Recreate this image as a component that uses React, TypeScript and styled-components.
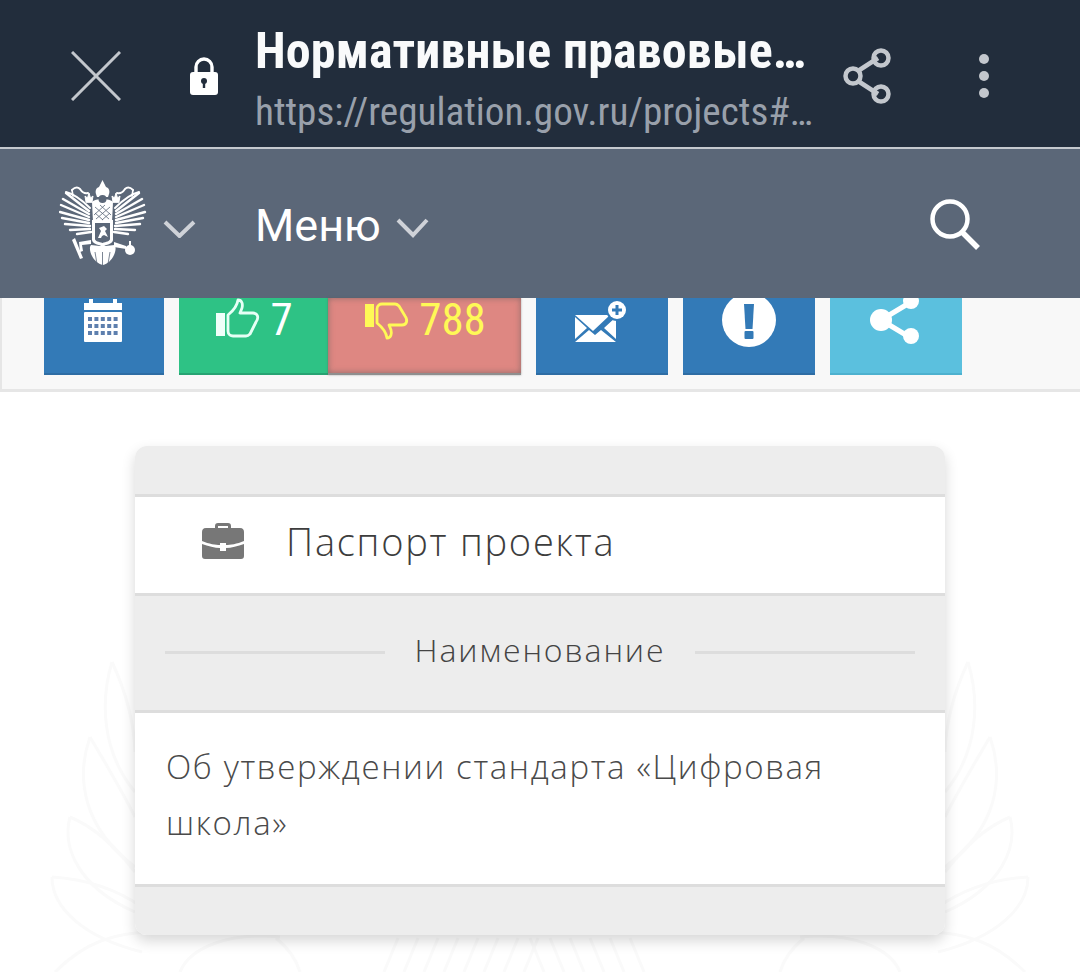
import styled, {createGlobalStyle} from 'styled-components';

const GlobalStyle = createGlobalStyle`
    html, body {
        margin: 0;
        padding: 0;
        background: #ffffff;
    }
    body {
        width: 1080px;
        height: 972px;
        overflow: hidden;
    }
`;

const Page = styled.div`
    position: relative;
    width: 1080px;
    height: 972px;
    overflow: hidden;
    background: #ffffff;
    font-family: 'Open Sans', 'Liberation Sans', sans-serif;
`;

const BrowserBar = styled.header`
    display: flex;
    align-items: flex-start;
    height: 147px;
    background: #222d3c;
    border-bottom: 2px solid #c5c9cf;
`;

const BarIcon = styled.svg`
    display: block;
    flex: none;
`;

const CloseIcon = styled(BarIcon)`
    margin: 51px 0 0 71px;
`;

const LockIcon = styled(BarIcon)`
    margin: 57px 0 0 68px;
`;

const TitleColumn = styled.div`
    width: 565px;
    margin: 0 0 0 36px;
    padding-top: 22px;
    overflow: hidden;
    font-family: Roboto, 'Liberation Sans', sans-serif;
    font-stretch: 75%;
    white-space: nowrap;
`;

const PageTitle = styled.div`
    font-size: 50px;
    line-height: 58px;
    font-weight: 700;
    letter-spacing: 0.15px;
    color: #f9fafb;
`;

const PageUrl = styled.div`
    margin-top: 8px;
    font-size: 39.2px;
    line-height: 48px;
    font-weight: 400;
    color: #99a0ab;
`;

const ShareIcon = styled(BarIcon)`
    margin: 48px 0 0 23px;
`;

const DotsIcon = styled(BarIcon)`
    margin: 53px 0 0 85px;
`;

const SiteNav = styled.nav`
    display: flex;
    align-items: flex-start;
    height: 149px;
    background: #5b6778;
`;

const Emblem = styled.svg`
    display: block;
    flex: none;
    margin: 31px 0 0 59px;
`;

const EmblemChevron = styled(BarIcon)`
    margin: 71px 0 0 16px;
`;

const MenuLabel = styled.div`
    margin: 51px 0 0 59px;
    font-family: Roboto, 'Liberation Sans', sans-serif;
    font-size: 45px;
    line-height: 52px;
    color: #ffffff;
`;

const MenuChevron = styled(BarIcon)`
    margin: 69px 0 0 15px;
`;

const SearchIcon = styled(BarIcon)`
    margin: 49px 0 0 500px;
`;

const ActionStrip = styled.section`
    display: flex;
    align-items: flex-start;
    height: 91px;
    padding-left: 42px;
    background: #f8f8f8;
    border-left: 2px solid #e6e6e6;
    border-bottom: 3px solid #e6e6e6;
`;

const ActionButton = styled.div<{$bg: string; $edge: string; $w: number; $gap?: number; $color?: string}>`
    display: flex;
    justify-content: center;
    gap: 10px;
    flex: none;
    box-sizing: border-box;
    width: ${p => p.$w}px;
    height: 77px;
    margin-left: ${p => p.$gap ?? 0}px;
    background: ${p => p.$bg};
    border-bottom: 2px solid ${p => p.$edge};
    color: ${p => p.$color ?? '#ffffff'};
`;

const VoteButton = styled(ActionButton)`
    padding-left: 2px;
`;

const DislikeButton = styled(VoteButton)`
    box-shadow: inset 0 0 6px rgba(90, 90, 90, 0.6), 0 0 2px rgba(90, 90, 90, 0.5);
`;

const VoteCount = styled.span`
    font-family: Roboto, 'Liberation Sans', sans-serif;
    font-stretch: 75%;
    font-size: 45px;
    line-height: 44px;
`;

const ButtonIcon = styled.svg<{$shift?: number; $drop?: number}>`
    display: block;
    flex: none;
    margin-right: ${p => p.$shift ?? 0}px;
    margin-top: ${p => p.$drop ?? 0}px;
`;

const Content = styled.main`
    padding: 54px 135px 0;
`;

const Watermark = styled.svg`
    position: absolute;
    left: 0;
    top: 642px;
`;

const Card = styled.article`
    position: relative;
    border-radius: 12px;
    overflow: hidden;
    box-shadow: 0 6px 14px rgba(0, 0, 0, 0.16);
    color: #444444;
`;

const GrayBand = styled.div<{$h: number}>`
    height: ${p => p.$h}px;
    background: #ededed;
`;

const WhiteRow = styled.div`
    background: #ffffff;
    border-top: 3px solid #dddddd;
    border-bottom: 3px solid #dddddd;
`;

const PassportRow = styled(WhiteRow)`
    display: flex;
    align-items: center;
    height: 88px;
    padding: 0 0 8px 66px;
`;

const PassportTitle = styled.div`
    margin-left: 41px;
    font-size: 38px;
    font-weight: 300;
    letter-spacing: 1.75px;
    color: #3d3d3d;
`;

const FieldHeading = styled.div`
    display: flex;
    align-items: center;
    justify-content: space-between;
    height: 114px;
    padding: 0 30px;
    background: #ededed;
`;

const HeadingRule = styled.span`
    width: 220px;
    height: 3px;
    margin-bottom: 1px;
    background: #dddddd;
`;

const HeadingText = styled.span`
    margin-bottom: 8px;
    font-size: 32px;
    font-weight: 300;
    letter-spacing: 1.9px;
    color: #444444;
`;

const FieldValue = styled.p`
    height: 171px;
    margin: 0;
    padding: 26px 90px 0 31px;
    box-sizing: border-box;
    background: #ffffff;
    font-size: 33px;
    line-height: 56px;
    font-weight: 300;
    letter-spacing: 1.64px;
    color: #4a4a4a;
`;

const ValueBorder = styled.div`
    height: 3px;
    background: #dddddd;
`;

const feathers: [number, number, number, number][] = [
    [30, 31, 7, 13],
    [30, 34, 4, 19],
    [30, 37, 2, 25],
    [30, 40, 1, 32],
    [30, 43, 3, 38],
    [31, 46, 6, 44],
    [31, 49, 11, 50],
    [32, 52, 18, 54],
];

const EagleWing = () => (
    <g fill="none" stroke="#ffffff" strokeLinecap="round">
        {feathers.map(([x1, y1, x2, y2]) => (
            <line key={`${x2}-${y2}`} x1={x1} y1={y1} x2={x2} y2={y2} strokeWidth={2.4} />
        ))}
        <path d="M7 12c8 2 16 8 24 16" strokeWidth={2} />
        <path d="M13 10c3-3 6-3 8-1 2 3 5 5 8 4" strokeWidth={2} />
        <path d="M13 10l1 6" strokeWidth={1.6} />
        <path d="M27 22l-1-6 2.500 2 1.500-5 1.500 5 2.500-2-1 6z" fill="#ffffff" strokeWidth={1} />
    </g>
);

const EagleEmblem = () => (
    <Emblem width="88" height="86" viewBox="0 0 88 86">
        <EagleWing />
        <g transform="translate(87 0) scale(-1 1)">
            <EagleWing />
        </g>
        <g fill="#ffffff">
            <path d="M37 14c-1-3 0-6 3-7l3.500-7L47 7c3 1 4 4 3 7l-1 3H38z" />
            <path d="M33 22c3-4 18-4 21 0l-1 20H34z" />
            <path d="M33 40h21v20c0 3-5 5-10.500 6C38 65 33 63 33 60z" />
            <path d="M43.500 64l3 2 9-1c2 2 1 7-1 11-2 4-6 8-10.500 9-5-1-9-5-11-9-2-4-3-9-1-11l9 1z" />
            <circle cx="71" cy="70" r="5" />
            <rect x="70" y="61" width="2" height="5" />
            <path d="M55 62l12 4v3l-12-2z" />
            <path d="M32 60l-12 2 1 10 3-1-1-6 9-1z" />
            <path d="M16 58l8 20-3 1-8-19z" />
        </g>
        <g fill="#5b6778">
            <circle cx="43.500" cy="19" r="4" />
            <path d="M36 43h15v16c0 2-4 3-7.500 4-3.500-1-7.500-2-7.500-4z" />
        </g>
        <g stroke="#5b6778" strokeWidth={0.8}>
            <path d="M36 27l14 12M36 33l8 7M41 25l11 10M51 27L37 39M51 33l-8 7M46 25L35 35" />
            <path d="M29 72l3 10M36 72l2 12M43.500 72v13M51 72l-2 12M58 72l-3 10" />
        </g>
        <path d="M39 58l3-7-2-3 5-2 3 3-2 2 3 6-4-2-2 1-1 2z" fill="#ffffff" />
    </Emblem>
);

const CalendarGlyph = () => {
    const cells = [0, 1, 2, 3, 4];
    return (
        <ButtonIcon width="38" height="44" viewBox="0 0 38 44" $shift={3}>
            <path d="M0 5h5V1h4v4h20V1h4v4h5v7H0z" fill="#ffffff" />
            <rect x="0" y="14" width="38" height="30" rx="1" fill="#ffffff" />
            {[19, 26, 33].flatMap(y =>
                cells.map(i => (
                    <rect key={`${y}-${i}`} x={4 + i * 6.4} y={y} width="4" height="4" fill="#5d7fae" />
                )),
            )}
        </ButtonIcon>
    );
};

const ThumbUpGlyph = () => (
    <ButtonIcon width="44" height="40" viewBox="0 0 44 40">
        <rect x="0" y="15" width="9" height="23" fill="#f0fffa" />
        <path
            d="M12 17c5-4 9-8 10-15 4 0 5 4 4 8l-2 5h13c5 0 6 5 3 9l-6 12c-1 1-2 2-4 2H17c-2 0-5-1-5-5z"
            fill="none"
            stroke="#e6fff5"
            strokeWidth={2.8}
            strokeLinejoin="round"
        />
    </ButtonIcon>
);

const ThumbDownGlyph = () => (
    <ButtonIcon width="44" height="40" viewBox="0 0 44 40" $drop={4}>
        <rect x="0" y="2" width="9" height="23" fill="#fff956" />
        <path
            d="M12 21c5 4 9 8 10 15 4 0 5-4 4-8l-2-5h13c5 0 6-5 3-9L34 4c-1-1-2-2-4-2H17c-2 0-5 1-5 5z"
            fill="none"
            stroke="#fff956"
            strokeWidth={2.8}
            strokeLinejoin="round"
        />
    </ButtonIcon>
);

const EnvelopeGlyph = () => (
    <ButtonIcon width="54" height="48" viewBox="0 0 54 48" $shift={2}>
        <path d="M1 17h35L19 33z" fill="#ffffff" />
        <path d="M1 19l12 11L1 41zM42 19v22L30 30z" fill="#ffffff" />
        <path d="M1 44l14-12 6 5 6-5 15 12z" fill="#ffffff" />
        <circle cx="43" cy="12" r="11" fill="#337ab7" />
        <circle cx="43" cy="12" r="9" fill="#ffffff" />
        <path d="M43 7v10M38 12h10" stroke="#337ab7" strokeWidth={3} />
    </ButtonIcon>
);

const AlertGlyph = () => (
    <ButtonIcon width="56" height="50" viewBox="0 0 56 50">
        <circle cx="28" cy="22" r="27" fill="#ffffff" />
        <path d="M23 6h10l-1.500 25h-7z" fill="#337ab7" />
        <rect x="23.500" y="33" width="9" height="8" rx="1" fill="#337ab7" />
    </ButtonIcon>
);

const ShareGlyph = () => (
    <ButtonIcon width="52" height="50" viewBox="0 0 52 50" $shift={3}>
        <path d="M12 22L42 4M12 22l30 18" stroke="#ffffff" strokeWidth={5} />
        <circle cx="12" cy="22" r="11" fill="#ffffff" />
        <circle cx="42" cy="3" r="8" fill="#ffffff" />
        <circle cx="42" cy="38" r="8" fill="#ffffff" />
    </ButtonIcon>
);

const BriefcaseGlyph = () => (
    <ButtonIcon width="44" height="38" viewBox="0 0 44 38">
        <path
            d="M14 6V4c0-2 1-3 3-3h10c2 0 3 1 3 3v2h9c3 0 4 2 4 4v9c-7 3-14 4-18 4v-2h-6v2c-4 0-11-1-18-4v-9c0-2 1-4 4-4zm3 0h10V4H17z"
            fill="#777777"
        />
        <path
            d="M1 22c6 2 13 4 18 4v3h6v-3c5 0 12-2 18-4v12c0 2-1 3-3 3H4c-2 0-3-1-3-3z"
            fill="#777777"
        />
    </ButtonIcon>
);

const leaves = [
    'M112 20c-12 40-10 90 23 130',
    'M112 20c14 30 22 60 23 90',
    'M90 95c-14 40-8 90 45 130',
    'M90 95c14 24 30 50 45 80',
    'M70 175c-8 30 8 70 65 95',
    'M70 175c24 10 46 30 65 55',
    'M52 235c0 30 30 60 90 75',
    'M52 235c34 2 64 12 90 30',
    'M55 330c30-30 60-40 100-40',
    'M180 330c10-25 50-40 100-35',
    'M300 330c-4-14-12-24-24-34',
];

const hatch = Array.from({length: 14}, (_, i) => 384 + i * 20);

const LeafSet = () => (
    <>
        {leaves.map(d => (
            <path key={d} d={d} />
        ))}
    </>
);

const App = () => (
    <Page>
        <GlobalStyle />
        <Watermark width="1080" height="330" viewBox="0 0 1080 330">
            <g fill="none" stroke="#fafafa" strokeWidth={3}>
                <LeafSet />
                <g transform="translate(1080 0) scale(-1 1)">
                    <LeafSet />
                </g>
                {hatch.map(x => (
                    <path key={x} d={`M${x} 330l${x < 540 ? 14 : -14}-34`} />
                ))}
            </g>
        </Watermark>
        <BrowserBar>
            <CloseIcon width="50" height="50" viewBox="0 0 50 50">
                <path d="M1 1l48 48M49 1L1 49" stroke="#c3c7cd" strokeWidth={3} />
            </CloseIcon>
            <LockIcon width="30" height="38" viewBox="0 0 30 38">
                <path d="M7 16V10a8 8 0 0 1 16 0v6" fill="none" stroke="#ffffff" strokeWidth={3.4} />
                <rect x="1" y="15" width="28" height="23" rx="3" fill="#ffffff" />
                <circle cx="15" cy="24" r="3" fill="#222d3c" />
                <rect x="13.800" y="25" width="2.400" height="6" fill="#222d3c" />
            </LockIcon>
            <TitleColumn>
                <PageTitle>Нормативные правовые…</PageTitle>
                <PageUrl>https://regulation.gov.ru/projects#…</PageUrl>
            </TitleColumn>
            <ShareIcon width="50" height="56" viewBox="0 0 50 56">
                <g fill="none" stroke="#c3c7cd" strokeWidth={4.5}>
                    <path d="M15 23l20-13M15 33l20 13" />
                    <circle cx="10" cy="28" r="7.500" />
                    <circle cx="38" cy="10" r="7.500" />
                    <circle cx="38" cy="46" r="7.500" />
                </g>
            </ShareIcon>
            <DotsIcon width="12" height="46" viewBox="0 0 12 46">
                <g fill="#c3c7cd">
                    <circle cx="6" cy="6" r="5" />
                    <circle cx="6" cy="23" r="5" />
                    <circle cx="6" cy="40" r="5" />
                </g>
            </DotsIcon>
        </BrowserBar>
        <SiteNav>
            <EagleEmblem />
            <EmblemChevron width="33" height="18" viewBox="0 0 33 18">
                <path d="M2 2l14.500 14L31 2" fill="none" stroke="#cfd2d8" strokeWidth={4} />
            </EmblemChevron>
            <MenuLabel>Меню</MenuLabel>
            <MenuChevron width="33" height="20" viewBox="0 0 33 20">
                <path d="M2 2l15 15L31 2" fill="none" stroke="#cfd2d8" strokeWidth={4} />
            </MenuChevron>
            <SearchIcon width="52" height="54" viewBox="0 0 52 54">
                <g fill="none" stroke="#ffffff" strokeWidth={4.5}>
                    <circle cx="21" cy="21" r="17.500" />
                    <path d="M33 34l16 16" strokeWidth={5.500} />
                </g>
            </SearchIcon>
        </SiteNav>
        <ActionStrip>
            <ActionButton $bg="#337ab7" $edge="#2e6da4" $w={120}>
                <CalendarGlyph />
            </ActionButton>
            <VoteButton $bg="#2ec285" $edge="#27a372" $w={149} $gap={15}>
                <ThumbUpGlyph />
                <VoteCount>7</VoteCount>
            </VoteButton>
            <DislikeButton $bg="#de8782" $edge="#8f8f8f" $w={193} $color="#fff956">
                <ThumbDownGlyph />
                <VoteCount>788</VoteCount>
            </DislikeButton>
            <ActionButton $bg="#337ab7" $edge="#2e6da4" $w={132} $gap={15}>
                <EnvelopeGlyph />
            </ActionButton>
            <ActionButton $bg="#337ab7" $edge="#2e6da4" $w={132} $gap={15}>
                <AlertGlyph />
            </ActionButton>
            <ActionButton $bg="#5bc0de" $edge="#4db1cf" $w={132} $gap={15}>
                <ShareGlyph />
            </ActionButton>
        </ActionStrip>
        <Content>
            <Card>
                <GrayBand $h={48} />
                <PassportRow>
                    <BriefcaseGlyph />
                    <PassportTitle>Паспорт проекта</PassportTitle>
                </PassportRow>
                <FieldHeading>
                    <HeadingRule />
                    <HeadingText>Наименование</HeadingText>
                    <HeadingRule />
                </FieldHeading>
                <ValueBorder />
                <FieldValue>Об утверждении стандарта «Цифровая школа»</FieldValue>
                <ValueBorder />
                <GrayBand $h={48} />
            </Card>
        </Content>
    </Page>
);

export default App;
